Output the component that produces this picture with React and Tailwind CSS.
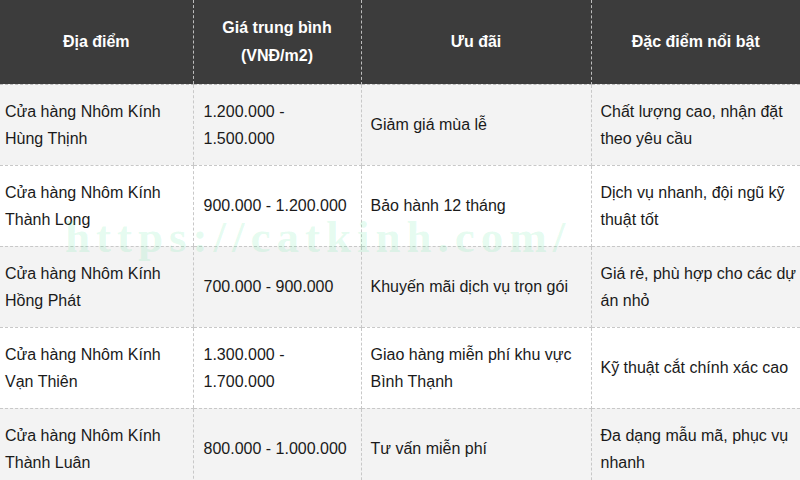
const rows = [
  {
    place: ["Cửa hàng Nhôm Kính", "Hùng Thịnh"],
    price: ["1.200.000 -", "1.500.000"],
    offer: ["Giảm giá mùa lễ"],
    note: ["Chất lượng cao, nhận đặt", "theo yêu cầu"],
  },
  {
    place: ["Cửa hàng Nhôm Kính", "Thành Long"],
    price: ["900.000 - 1.200.000"],
    offer: ["Bảo hành 12 tháng"],
    note: ["Dịch vụ nhanh, đội ngũ kỹ", "thuật tốt"],
  },
  {
    place: ["Cửa hàng Nhôm Kính", "Hồng Phát"],
    price: ["700.000 - 900.000"],
    offer: ["Khuyến mãi dịch vụ trọn gói"],
    note: ["Giá rẻ, phù hợp cho các dự", "án nhỏ"],
  },
  {
    place: ["Cửa hàng Nhôm Kính", "Vạn Thiên"],
    price: ["1.300.000 -", "1.700.000"],
    offer: ["Giao hàng miễn phí khu vực", "Bình Thạnh"],
    note: ["Kỹ thuật cắt chính xác cao"],
  },
  {
    place: ["Cửa hàng Nhôm Kính", "Thành Luân"],
    price: ["800.000 - 1.000.000"],
    offer: ["Tư vấn miễn phí"],
    note: ["Đa dạng mẫu mã, phục vụ", "nhanh"],
  },
];

const Lines = ({ lines }) =>
  lines.map((l, i) => (
    <div key={i} className="whitespace-nowrap">
      {l}
    </div>
  ));

export default function App() {
  return (
    <div className="relative w-[800px] h-[480px] overflow-hidden bg-white font-['Liberation_Sans',Arial,sans-serif]">
      <table className="w-[800px] table-fixed border-collapse text-[16px] leading-[27px] text-[#1a1a1a]">
        <colgroup>
          <col className="w-[193px]" />
          <col className="w-[168px]" />
          <col className="w-[230px]" />
          <col className="w-[209px]" />
        </colgroup>
        <thead>
          <tr className="h-[84px] bg-[#3c3c3c] text-white font-bold leading-[28px]">
            <th className="border-b border-dashed border-[#bdbdbd] text-center align-middle">Địa điểm</th>
            <th className="border-x border-b border-dashed border-[#bdbdbd] text-center align-middle">
              Giá trung bình
              <br />
              (VNĐ/m2)
            </th>
            <th className="border-x border-b border-dashed border-[#bdbdbd] text-center align-middle">Ưu đãi</th>
            <th className="border-b border-dashed border-[#bdbdbd] text-center align-middle">Đặc điểm nổi bật</th>
          </tr>
        </thead>
        <tbody>
          {rows.map((r, i) => (
            <tr key={i} className={`h-[81px] ${i % 2 === 0 ? "bg-[#f3f3f3]" : "bg-white"}`}>
              <td className="pl-[5px] align-middle border-b border-dashed border-[#c8c8c8]">
                <Lines lines={r.place} />
              </td>
              <td className="pl-[10px] align-middle border-x border-b border-dashed border-[#c8c8c8]">
                <Lines lines={r.price} />
              </td>
              <td className="pl-[9px] align-middle border-x border-b border-dashed border-[#c8c8c8]">
                <Lines lines={r.offer} />
              </td>
              <td className="pl-[9px] align-middle border-b border-dashed border-[#c8c8c8]">
                <Lines lines={r.note} />
              </td>
            </tr>
          ))}
        </tbody>
      </table>

      {/* watermark */}
      <div className="pointer-events-none absolute left-[65px] top-[215px] whitespace-nowrap font-['Liberation_Serif',serif] font-bold text-[45px] leading-none tracking-[6px] text-[rgba(60,230,140,0.14)]">
        https://catkinh.com/
      </div>
    </div>
  );
}
